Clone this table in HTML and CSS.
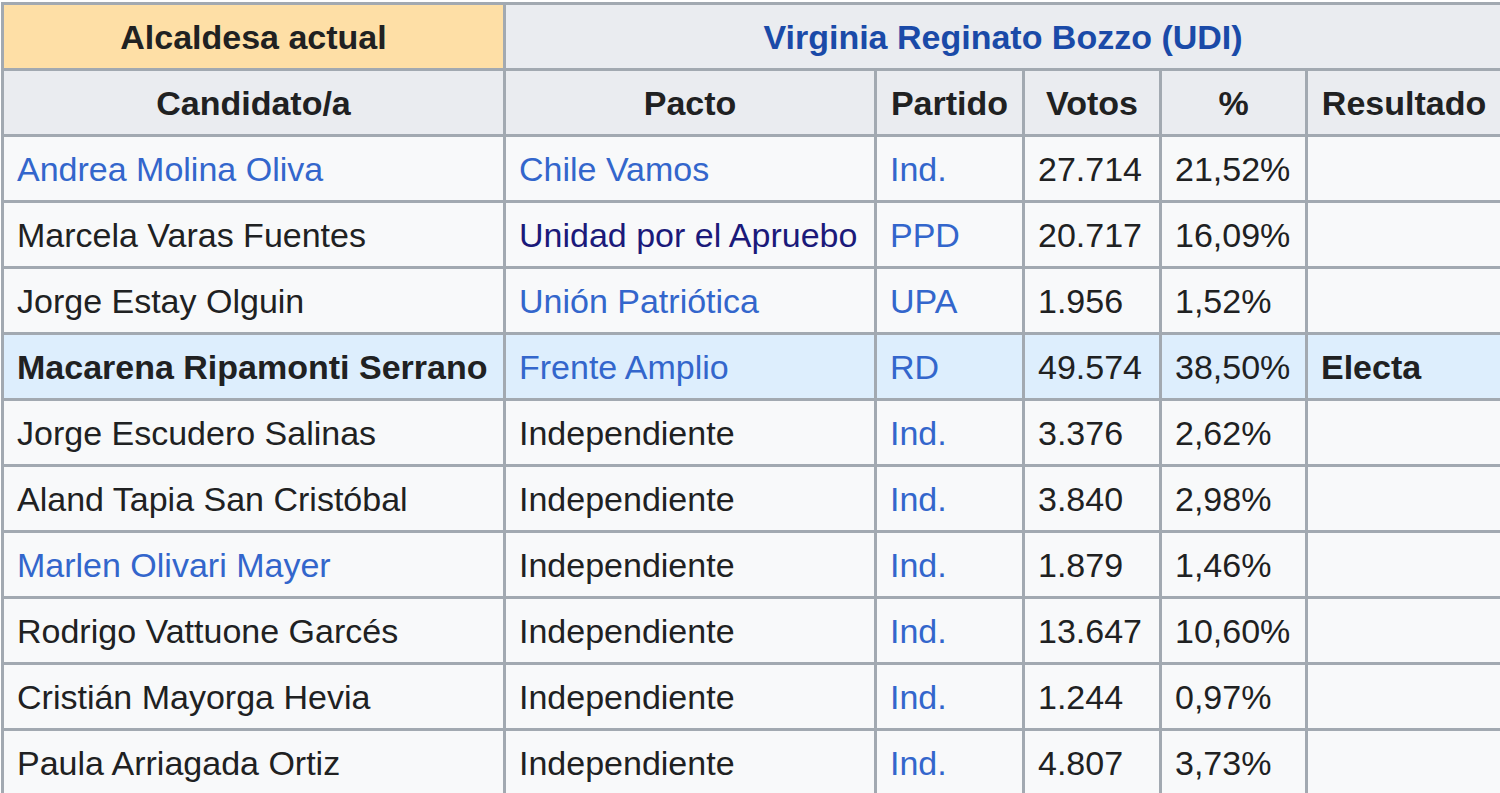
FILE: index.html
```html
<!DOCTYPE html>
<html lang="es">
<head>
<meta charset="utf-8">
<title>Elección alcaldicia</title>
<link rel="stylesheet" href="styles.css">
</head>
<body>
<table class="wikitable">
  <colgroup>
    <col class="c-cand">
    <col class="c-pacto">
    <col class="c-partido">
    <col class="c-votos">
    <col class="c-pct">
    <col class="c-res">
  </colgroup>
  <thead>
    <tr>
      <th class="incumbent">Alcaldesa actual</th>
      <th colspan="5"><a class="link strong-link" href="#">Virginia Reginato Bozzo (UDI)</a></th>
    </tr>
    <tr>
      <th>Candidato/a</th>
      <th>Pacto</th>
      <th>Partido</th>
      <th>Votos</th>
      <th>%</th>
      <th>Resultado</th>
    </tr>
  </thead>
  <tbody>
    <tr>
      <td><a class="link" href="#">Andrea Molina Oliva</a></td>
      <td><a class="link" href="#">Chile Vamos</a></td>
      <td><a class="link" href="#">Ind.</a></td>
      <td>27.714</td>
      <td>21,52%</td>
      <td></td>
    </tr>
    <tr>
      <td>Marcela Varas Fuentes</td>
      <td><a class="link visited" href="#">Unidad por el Apruebo</a></td>
      <td><a class="link" href="#">PPD</a></td>
      <td>20.717</td>
      <td>16,09%</td>
      <td></td>
    </tr>
    <tr>
      <td>Jorge Estay Olguin</td>
      <td><a class="link" href="#">Unión Patriótica</a></td>
      <td><a class="link" href="#">UPA</a></td>
      <td>1.956</td>
      <td>1,52%</td>
      <td></td>
    </tr>
    <tr class="winner">
      <td><b>Macarena Ripamonti Serrano</b></td>
      <td><a class="link" href="#">Frente Amplio</a></td>
      <td><a class="link" href="#">RD</a></td>
      <td>49.574</td>
      <td>38,50%</td>
      <td><b>Electa</b></td>
    </tr>
    <tr>
      <td>Jorge Escudero Salinas</td>
      <td>Independiente</td>
      <td><a class="link" href="#">Ind.</a></td>
      <td>3.376</td>
      <td>2,62%</td>
      <td></td>
    </tr>
    <tr>
      <td>Aland Tapia San Cristóbal</td>
      <td>Independiente</td>
      <td><a class="link" href="#">Ind.</a></td>
      <td>3.840</td>
      <td>2,98%</td>
      <td></td>
    </tr>
    <tr>
      <td><a class="link" href="#">Marlen Olivari Mayer</a></td>
      <td>Independiente</td>
      <td><a class="link" href="#">Ind.</a></td>
      <td>1.879</td>
      <td>1,46%</td>
      <td></td>
    </tr>
    <tr>
      <td>Rodrigo Vattuone Garcés</td>
      <td>Independiente</td>
      <td><a class="link" href="#">Ind.</a></td>
      <td>13.647</td>
      <td>10,60%</td>
      <td></td>
    </tr>
    <tr>
      <td>Cristián Mayorga Hevia</td>
      <td>Independiente</td>
      <td><a class="link" href="#">Ind.</a></td>
      <td>1.244</td>
      <td>0,97%</td>
      <td></td>
    </tr>
    <tr>
      <td>Paula Arriagada Ortiz</td>
      <td>Independiente</td>
      <td><a class="link" href="#">Ind.</a></td>
      <td>4.807</td>
      <td>3,73%</td>
      <td></td>
    </tr>
  </tbody>
</table>
</body>
</html>
```

FILE: styles.css
```css
html, body {
  margin: 0;
  padding: 0;
  background: #ffffff;
}

body {
  padding: 2px 0 0 1px;
  font-family: "Liberation Sans", Arial, sans-serif;
  font-size: 34px;
  color: #202122;
  overflow: hidden;
}

.wikitable {
  border-collapse: collapse;
  table-layout: fixed;
  width: 1499px;
  background: #f8f9fa;
  border: 3px solid #a2a9b1;
}

.c-cand { width: 502px; }
.c-pacto { width: 371px; }
.c-partido { width: 148px; }
.c-votos { width: 137px; }
.c-pct { width: 146px; }
.c-res { width: 195px; }

.wikitable th,
.wikitable td {
  border: 3px solid #a2a9b1;
  padding: 12px 13px 11px 13px;
  line-height: 40px;
  white-space: nowrap;
  overflow: hidden;
}

.wikitable th {
  background: #eaecf0;
  font-weight: bold;
  text-align: center;
}

.wikitable td {
  text-align: left;
}

.wikitable th.incumbent {
  background: #fedfa6;
}

.winner td {
  background: #ddeefd;
}

.link {
  color: #3366cc;
  text-decoration: none;
}

.link.visited {
  color: #1b1a7a;
}

.link.strong-link {
  color: #1a4aa8;
}
```
